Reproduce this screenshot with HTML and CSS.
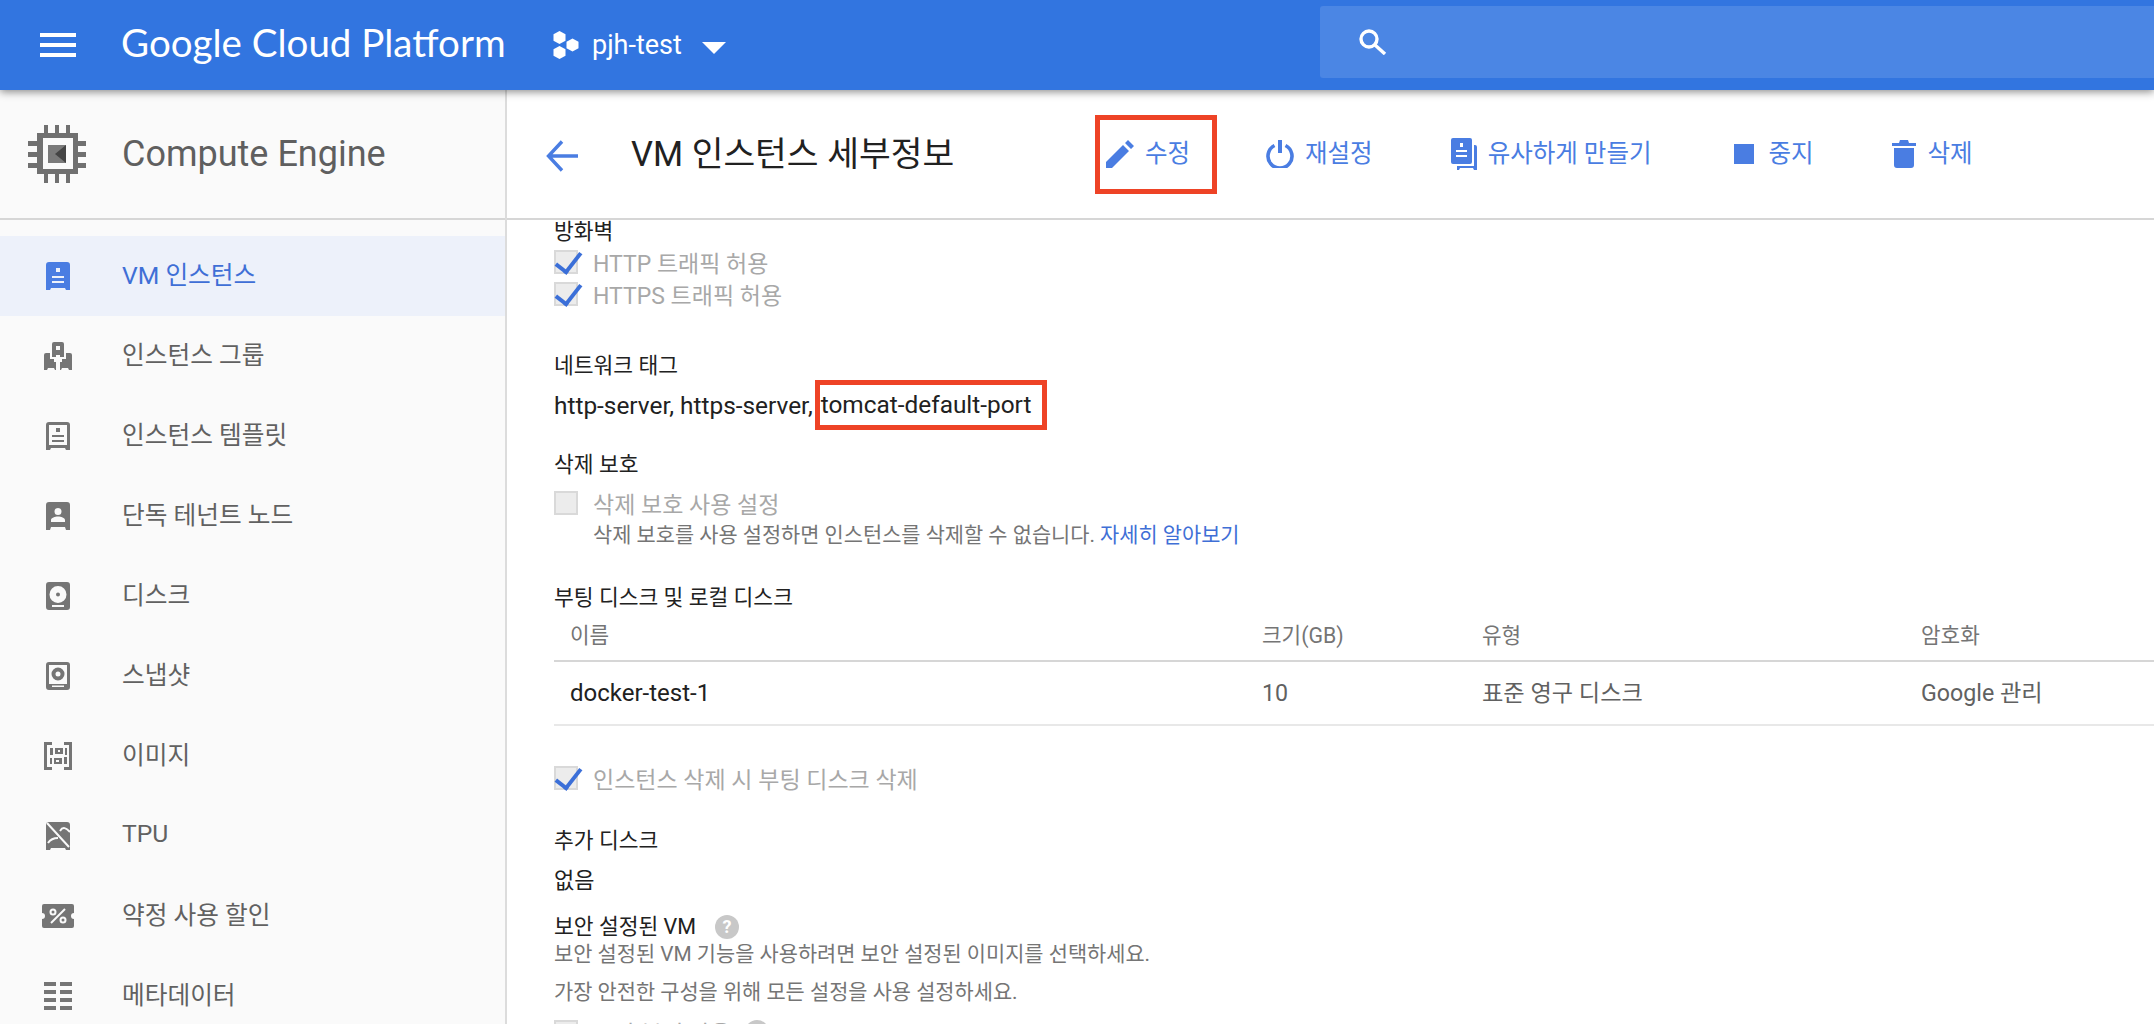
FILE: index.html
```html
<!DOCTYPE html>
<html lang="ko">

<head>
    <meta charset="UTF-8">
    <title>VM 인스턴스 세부정보</title>
    <link rel="stylesheet" href="styles.css">
</head>

<body>

    <header class="topbar">
        <svg class="menu-icon" viewBox="0 0 36 24"><path d="M0 0h36v4H0zM0 10h36v4H0zM0 20h36v4H0z" /></svg>
        <div class="logo">Google Cloud Platform</div>
        <div class="project">
            <svg class="project-icon" viewBox="0 0 26 28"><path d="M6.5 0l6 3.2v6.6l-6 3.2-6-3.2V3.2zM6.5 15l6 3.2v6.6l-6 3.2-6-3.2v-6.6zM19.500 7.500l6 3.200v6.600l-6 3.200-6-3.200v-6.600z" /></svg>
            <span class="project-name">pjh-test</span>
            <span class="caret"></span>
        </div>
        <div class="search">
            <svg class="search-icon" viewBox="0 0 28 26" fill="none" stroke="#fff" stroke-width="3.4"><ellipse cx="10" cy="10" rx="8" ry="8" /><path d="M16 16l10 9" /></svg>
        </div>
    </header>

    <div class="layout">
        <aside class="sidebar">
            <div class="product">
                <svg class="product-icon" viewBox="0 0 58 58">
                    <path fill="#707070" d="M9 8h41v41H9z" />
                    <path fill="#707070" d="M16 0h4v8h-4zM27 0h4v8h-4zM38 0h4v8h-4zM16 49h4v9h-4zM27 49h4v9h-4zM38 49h4v9h-4zM0 16h9v5H0zM0 27h9v5H0zM0 38h9v5H0zM50 16h8v5h-8zM50 27h8v5h-8zM50 38h8v5h-8z" />
                    <path fill="#fafafa" d="M15 13h30v31H15z" />
                    <path fill="#7a7a7a" d="M20 20h18v18H20z" />
                    <path fill="#444" d="M38 20v18L27 29z" />
                </svg>
                <span>Compute Engine</span>
            </div>
            <nav class="nav">
                <a class="nav-item active">
                    <svg viewBox="0 0 24 28"><path d="M3 0h18a3 3 0 0 1 3 3v25h-4l-1-2H5l-1 2H0V3a3 3 0 0 1 3-3zM10 6v4h4V6zM6 14v2h12v-2zM6 19v2h12v-2z" fill-rule="evenodd" /></svg>
                    <span>VM 인스턴스</span>
                </a>
                <a class="nav-item">
                    <svg class="icon-28" viewBox="0 0 28 28"><path d="M10 0h8a2 2 0 0 1 2 2v13h-4v-2h-4v2H8V2a2 2 0 0 1 2-2zM12 4v4h4V4zM2 11h4v6h4v3h2v8h-1l-1-2H4l-1 2H0V13a2 2 0 0 1 2-2zM22 11h4a2 2 0 0 1 2 2v15h-3l-1-2h-6l-1 2h-1v-8h2v-3h4z" fill-rule="evenodd" /></svg>
                    <span>인스턴스 그룹</span>
                </a>
                <a class="nav-item">
                    <svg viewBox="0 0 24 28"><path d="M3 0h18a3 3 0 0 1 3 3v25h-4l-1-2H5l-1 2H0V3a3 3 0 0 1 3-3zM3 3v20h18V3zM10 6h4v4h-4zM6 13h12v2H6zM6 18h12v2H6z" fill-rule="evenodd" /></svg>
                    <span>인스턴스 템플릿</span>
                </a>
                <a class="nav-item">
                    <svg viewBox="0 0 24 28"><path d="M3 0h18a3 3 0 0 1 3 3v25h-4l-1-3H5l-1 3H0V3a3 3 0 0 1 3-3zM12 6a3.500 3.500 0 1 0 0 7 3.500 3.500 0 0 0 0-7zM5 20h14v-2c0-2-4-3.500-7-3.500S5 16 5 18z" fill-rule="evenodd" /></svg>
                    <span>단독 테넌트 노드</span>
                </a>
                <a class="nav-item">
                    <svg viewBox="0 0 24 28"><path d="M3 0h18a3 3 0 0 1 3 3v22a3 3 0 0 1-3 3H3a3 3 0 0 1-3-3V3a3 3 0 0 1 3-3zM12 4a8.500 8.500 0 1 0 0 17 8.500 8.500 0 0 0 0-17zM12 10.500a2 2 0 1 1 0 4 2 2 0 0 1 0-4zM6 23v2h12v-2z" fill-rule="evenodd" /></svg>
                    <span>디스크</span>
                </a>
                <a class="nav-item">
                    <svg viewBox="0 0 24 28"><path d="M3 0h18a3 3 0 0 1 3 3v22a3 3 0 0 1-3 3H3a3 3 0 0 1-3-3V3a3 3 0 0 1 3-3zM3 3v19h18V3zM12 5.500a6.500 6.500 0 1 1 0 13 6.500 6.500 0 0 1 0-13zM12 9.500a2.500 2.500 0 1 0 0 5 2.500 2.500 0 0 0 0-5zM6 23.500v1.500h12v-1.500z" fill-rule="evenodd" /></svg>
                    <span>스냅샷</span>
                </a>
                <a class="nav-item">
                    <svg class="icon-28" viewBox="0 0 28 28"><path d="M0 0h8v3H3v22h5v3H0zM20 0h8v28h-8v-3h5V3h-5zM6 6h3v7H6zM11 6h8v6h-8zM14 8v2h2V8zM21 6h2v7h-2zM6 16h2v6H6zM10 16h8v6h-8zM12 18v2h3v-2zM20 15h3v7h-3z" fill-rule="evenodd" /></svg>
                    <span>이미지</span>
                </a>
                <a class="nav-item">
                    <svg viewBox="0 0 24 28"><path d="M3 0h18a3 3 0 0 1 3 3v25h-4l-1-2H5l-1 2H0V3a3 3 0 0 1 3-3z" /><path d="M1 1l22 24M14 9c3-5 6-3 10 1M12 16c-5 0-8 2-10 5" fill="none" stroke="#fafafa" stroke-width="2" /></svg>
                    <span>TPU</span>
                </a>
                <a class="nav-item">
                    <svg class="wide" viewBox="0 0 32 24"><path d="M2 0h28a2 2 0 0 1 2 2v7a3 3 0 0 0 0 6v7a2 2 0 0 1-2 2H2a2 2 0 0 1-2-2v-7a3 3 0 0 0 0-6V2a2 2 0 0 1 2-2z" /><path d="M9 19L23 5" fill="none" stroke="#fafafa" stroke-width="2" /><circle cx="11" cy="8" r="2.500" fill="none" stroke="#fafafa" stroke-width="2" /><circle cx="21" cy="16" r="2.500" fill="none" stroke="#fafafa" stroke-width="2" /></svg>
                    <span>약정 사용 할인</span>
                </a>
                <a class="nav-item">
                    <svg class="icon-28" viewBox="0 0 28 28"><path d="M0 0h12v4H0zM16 0h12v4H16zM0 8h12v4H0zM16 8h12v4H16zM0 16h12v4H0zM16 16h12v4H16zM0 24h12v4H0zM16 24h12v4H16z" /></svg>
                    <span>메타데이터</span>
                </a>
            </nav>
        </aside>

        <main class="main">
            <div class="titlebar">
                <svg class="back" viewBox="0 0 32 32" fill="none" stroke="#4a7de2" stroke-width="3.400"><path d="M16 1.500L2.500 16 16 30.500M3 16h29" /></svg>
                <h1>VM 인스턴스 세부정보</h1>
                <div class="actions">
                    <a class="action marked">
                        <svg viewBox="0 0 28 28"><path d="M0 28v-6L17 5l6 6L6 28zM19 3l3-3 6 6-3 3z" /></svg>
                        <span>수정</span>
                    </a>
                    <a class="action">
                        <svg class="icon-power" viewBox="0 0 28 28"><path d="M8.500 5.500a12 12 0 1 0 11 0" /><path d="M14 0v13" stroke-width="4" /></svg>
                        <span>재설정</span>
                    </a>
                    <a class="action">
                        <svg class="icon-copy" viewBox="0 0 26 32"><path d="M2 0h17a2 2 0 0 1 2 2v22a2 2 0 0 1-2 2H2a2 2 0 0 1-2-2V2a2 2 0 0 1 2-2zM9 5v4h3V5zM5 12v2h11v-2zM5 17v2h11v-2z" fill-rule="evenodd" /><path d="M23 7h1a2 2 0 0 1 2 2v23h-3l-1-2H9l-1 2H6v-4h17z" /></svg>
                        <span>유사하게 만들기</span>
                    </a>
                    <a class="action">
                        <svg class="icon-stop" viewBox="0 0 20 20"><path d="M0 0h20v20H0z" /></svg>
                        <span>중지</span>
                    </a>
                    <a class="action">
                        <svg class="icon-trash" viewBox="0 0 24 28"><path d="M0 3h7l1-3h8l1 3h7v3H0zM2 8h20v17a3 3 0 0 1-3 3H5a3 3 0 0 1-3-3z" /></svg>
                        <span>삭제</span>
                    </a>
                </div>
            </div>

            <div class="content">
                <div class="label first">방화벽</div>
                <div class="check-row">
                    <span class="checkbox checked"></span>
                    <span class="check-label">HTTP 트래픽 허용</span>
                </div>
                <div class="check-row">
                    <span class="checkbox checked"></span>
                    <span class="check-label">HTTPS 트래픽 허용</span>
                </div>

                <div class="label tags-label">네트워크 태그</div>
                <div class="tags">http-server, https-server,<span class="tag-mark">tomcat-default-port</span></div>

                <div class="label protect-label">삭제 보호</div>
                <div class="check-row">
                    <span class="checkbox"></span>
                    <span class="check-label">삭제 보호 사용 설정</span>
                </div>
                <div class="hint indent">삭제 보호를 사용 설정하면 인스턴스를 삭제할 수 없습니다. <a class="link">자세히 알아보기</a></div>

                <div class="label disk-label">부팅 디스크 및 로컬 디스크</div>
                <div class="disk-table">
                    <div class="disk-head">
                        <span>이름</span>
                        <span>크기(GB)</span>
                        <span>유형</span>
                        <span>암호화</span>
                    </div>
                    <div class="disk-row">
                        <span class="disk-name">docker-test-1</span>
                        <span>10</span>
                        <span>표준 영구 디스크</span>
                        <span>Google 관리</span>
                    </div>
                </div>

                <div class="check-row delete-row">
                    <span class="checkbox checked"></span>
                    <span class="check-label">인스턴스 삭제 시 부팅 디스크 삭제</span>
                </div>

                <div class="label extra-label">추가 디스크</div>
                <div class="value">없음</div>

                <div class="label shielded-label">보안 설정된 VM <span class="help">?</span></div>
                <div class="hint">보안 설정된 VM 기능을 사용하려면 보안 설정된 이미지를 선택하세요.</div>
                <div class="hint second">가장 안전한 구성을 위해 모든 설정을 사용 설정하세요.</div>
                <div class="check-row boot-row">
                    <span class="checkbox"></span>
                    <span class="check-label">보안 부팅 사용</span>
                    <span class="help">?</span>
                </div>
            </div>
        </main>
    </div>

</body>

</html>
```

FILE: styles.css
```css
* {
    box-sizing: border-box;
}

body {
    margin: 0;
    height: 1024px;
    overflow: hidden;
    background-color: #fff;
    font-family: Roboto, "Noto Sans CJK KR", sans-serif;
    color: #212121;
}

/* top bar */

.topbar {
    position: relative;
    z-index: 2;
    display: flex;
    align-items: center;
    height: 90px;
    padding-left: 40px;
    background-color: #3275e0;
    box-shadow: 0 2px 8px rgba(0, 0, 0, 0.45);
    color: #fff;
}

.menu-icon {
    width: 36px;
    height: 24px;
    fill: #fff;
}

.logo {
    width: 432px;
    margin-left: 45px;
    margin-bottom: 6px;
    font-family: Lato, sans-serif;
    font-size: 38.5px;
    line-height: 44px;
}

.project {
    display: flex;
    align-items: center;
    width: 767px;
}

.project-icon {
    width: 26px;
    height: 28px;
    fill: #fff;
}

.project-name {
    margin-left: 13px;
    font-size: 27px;
}

.caret {
    width: 0;
    height: 0;
    margin-left: 20px;
    margin-top: 6px;
    border-left: 12px solid transparent;
    border-right: 12px solid transparent;
    border-top: 12px solid #fff;
}

.search {
    flex: 1;
    display: flex;
    align-items: center;
    height: 72px;
    margin-top: -6px;
    padding-left: 39px;
    background-color: #4b86e4;
    border-radius: 3px 0 0 3px;
}

.search-icon {
    width: 28px;
    height: 26px;
}

/* page */

.layout {
    display: flex;
    height: 934px;
}

.sidebar {
    width: 507px;
    flex-shrink: 0;
    overflow: hidden;
    background-color: #fafafa;
    border-right: 2px solid #dcdcdc;
}

.product {
    display: flex;
    align-items: center;
    height: 130px;
    padding-left: 28px;
    border-bottom: 2px solid #d6d6d6;
    color: #5f5f5f;
    font-size: 36px;
}

.product-icon {
    width: 58px;
    height: 58px;
    margin-right: 36px;
}

.nav {
    padding-top: 16px;
}

.nav-item {
    display: flex;
    align-items: center;
    height: 80px;
    padding-left: 122px;
    position: relative;
    color: #616161;
    font-size: 24.7px;
}

.nav-item span {
    margin-bottom: 6px;
}

.nav-item svg {
    position: absolute;
    left: 46px;
    top: 26px;
    width: 24px;
    height: 28px;
    fill: #757575;
}

.nav-item svg.icon-28 {
    left: 44px;
    width: 28px;
}

.nav-item svg.wide {
    left: 42px;
    top: 28px;
    width: 32px;
    height: 24px;
}

.nav-item.active {
    background-color: #edf1fa;
    color: #3f6fd6;
}

.nav-item.active svg {
    fill: #4a7de2;
}

.main {
    flex: 1;
    min-width: 0;
    overflow: hidden;
}

.titlebar {
    display: flex;
    align-items: center;
    height: 130px;
    padding-left: 39px;
    border-bottom: 2px solid #d6d6d6;
}

.back {
    width: 32px;
    height: 32px;
    margin-top: 4px;
}

h1 {
    width: 464px;
    margin: 0 0 6px 53px;
    font-size: 34.5px;
    font-weight: 400;
    white-space: nowrap;
}

.actions {
    display: flex;
    align-items: center;
    color: #4a7de2;
    font-size: 24.5px;
}

.action {
    display: flex;
    align-items: center;
    height: 79px;
    margin-right: 78px;
    white-space: nowrap;
}

.action span {
    margin-bottom: 6px;
}

.action svg {
    width: 28px;
    height: 28px;
    margin-right: 11px;
    fill: #4a7de2;
}

.action svg.icon-power {
    fill: none;
    stroke: #4a7de2;
    stroke-width: 3.6;
}

.action svg.icon-copy {
    width: 26px;
    height: 32px;
    margin-right: 11px;
}

.action svg.icon-stop {
    width: 20px;
    height: 20px;
    margin-left: 5px;
    margin-right: 14px;
}

.action svg.icon-trash {
    width: 24px;
    height: 28px;
    margin-right: 12px;
}

.marked {
    width: 122px;
    margin-right: 49px;
    padding-left: 6px;
    border: 5px solid #ee4326;
}

.content {
    padding-left: 47px;
}

.label {
    font-size: 21.5px;
    line-height: 30px;
}

.first {
    margin-top: -3px;
    margin-bottom: -1px;
}

.check-row {
    display: flex;
    align-items: center;
    height: 32px;
    white-space: nowrap;
}

.checkbox {
    position: relative;
    width: 24px;
    height: 24px;
    margin-right: 15px;
    background-color: #ececec;
    border: 2px solid #d9d9d9;
}

.checkbox.checked::after {
    content: "";
    position: absolute;
    left: 5px;
    top: -5px;
    width: 11px;
    height: 22px;
    border-right: 4px solid #3b6fd8;
    border-bottom: 4px solid #3b6fd8;
    transform: rotate(38deg);
}

.check-label {
    color: #a8a8a8;
    font-size: 23px;
}

.tags-label {
    margin-top: 41px;
}

.tags {
    display: flex;
    align-items: center;
    margin-top: -1px;
    font-size: 24.4px;
    white-space: nowrap;
}

.tag-mark {
    margin-left: 2px;
    padding: 0 11px 0 1px;
    height: 50px;
    line-height: 40px;
    border: 5px solid #ee4326;
}

.protect-label {
    margin-top: 20px;
    margin-bottom: 7px;
}

.hint {
    color: #757575;
    font-size: 20.85px;
    line-height: 30px;
    white-space: nowrap;
}

.indent {
    margin-left: 39px;
    margin-top: 1px;
}

.link {
    color: #3f6fd6;
}

.disk-label {
    margin-top: 33px;
}

.disk-table {
    margin-top: 8px;
}

.disk-head,
.disk-row {
    display: grid;
    grid-template-columns: 692px 220px 439px 1fr;
    padding-left: 16px;
    white-space: nowrap;
}

.disk-head {
    height: 41px;
    line-height: 30px;
    border-bottom: 2px solid #d6d6d6;
    color: #757575;
    font-size: 21.3px;
}

.disk-row {
    height: 64px;
    line-height: 62px;
    border-bottom: 2px solid #e8e8e8;
    color: #616161;
    font-size: 23.2px;
}

.disk-name {
    color: #212121;
    font-size: 24px;
}

.delete-row {
    margin-top: 36px;
}

.extra-label {
    margin-top: 32px;
}

.value {
    margin-top: 10px;
    font-size: 22px;
    line-height: 30px;
}

.shielded-label {
    display: flex;
    align-items: center;
    gap: 19px;
    margin-top: 16px;
    margin-bottom: -3px;
}

.help {
    display: inline-block;
    flex-shrink: 0;
    width: 24px;
    height: 24px;
    line-height: 24px;
    border-radius: 50%;
    background-color: #c8c8c8;
    color: #fff;
    font-size: 18px;
    font-weight: 700;
    text-align: center;
}

.second {
    margin-top: 8px;
}

.boot-row {
    margin-top: 9px;
}

.boot-row .help {
    margin-left: 14px;
}
```
